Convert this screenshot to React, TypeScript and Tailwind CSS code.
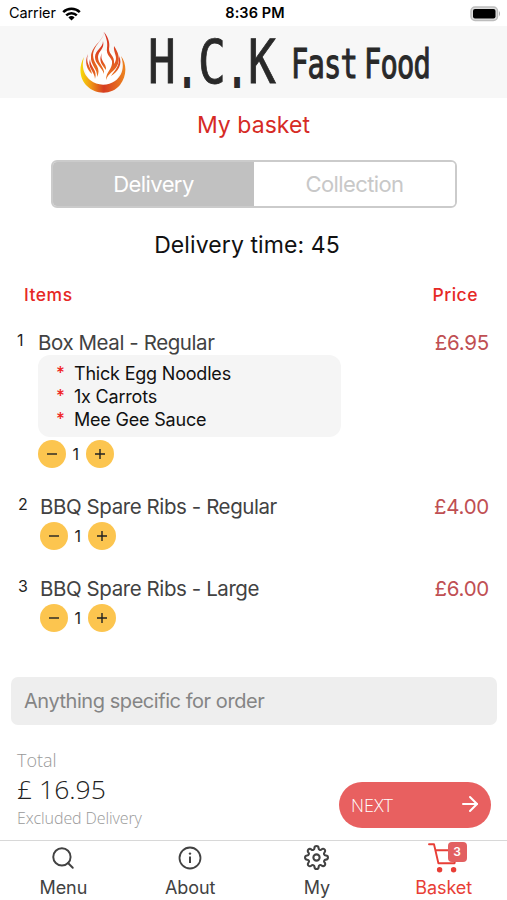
import { useState } from "react";
import { FiArrowRight, FiSearch, FiSettings } from "react-icons/fi";

interface BasketItem {
    name: string;
    price: string;
    quantity: number;
    extras: string[];
}

const initialItems: BasketItem[] = [
    { name: "Box Meal - Regular", price: "£6.95", quantity: 1, extras: ["Thick Egg Noodles", "1x Carrots", "Mee Gee Sauce"] },
    { name: "BBQ Spare Ribs - Regular", price: "£4.00", quantity: 1, extras: [] },
    { name: "BBQ Spare Ribs - Large", price: "£6.00", quantity: 1, extras: [] },
];

function StatusBar() {
    return (
        <div className="h-[26px] shrink-0 grid grid-cols-3 items-center pl-[9px] pr-[6px] pt-px text-black text-[14.5px] leading-none">
            <div className="flex items-center gap-[6px]">
                <span className="tracking-[-0.1px]">Carrier</span>
                <svg width="19" height="14" viewBox="0 0 19 14" fill="none" stroke="#000" strokeWidth="2.5">
                    <path d="M1.2 5.2 A11.8 11.8 0 0 1 17.8 5.2" />
                    <path d="M4.2 8.3 A7.6 7.6 0 0 1 14.8 8.3" />
                    <path d="M9.5 13.6 L6.4 10.4 A4.4 4.4 0 0 1 12.6 10.4 Z" fill="#000" stroke="none" />
                </svg>
            </div>
            <div className="text-center font-semibold text-[14.5px] tracking-[0.1px] whitespace-nowrap">8:36 PM</div>
            <div className="flex justify-end">
                <svg width="31" height="16" viewBox="0 0 31 16">
                    <rect x="1" y="1" width="26.5" height="13.5" rx="4" fill="#ddd" stroke="#bdbdbd" strokeWidth="1.5" />
                    <rect x="3" y="3" width="22.5" height="9.5" rx="2" fill="#000" />
                    <path d="M29 5 Q31 7.7 29 10.5 Z" fill="#aaa" />
                </svg>
            </div>
        </div>
    );
}

function FlameLogo() {
    return (
        <svg width="46" height="64" viewBox="0 0 46 64" className="shrink-0">
            <defs>
                <linearGradient id="ring" x1="0" y1="0" x2="1" y2="0">
                    <stop offset="0" stopColor="#f7dc08" />
                    <stop offset="0.22" stopColor="#f09a15" />
                    <stop offset="0.52" stopColor="#d63c22" />
                    <stop offset="1" stopColor="#ed851f" />
                </linearGradient>
                <linearGradient id="flame" x1="0" y1="0" x2="0" y2="1">
                    <stop offset="0" stopColor="#d52b23" />
                    <stop offset="1" stopColor="#e97620" />
                </linearGradient>
            </defs>
            <circle cx="23" cy="38" r="17.5" fill="#fff" />
            <path d="M4 27 C-2 38 0 49 7 56 C16 65 32 65 40 55 C47 46 47 34 41 26 C45 37 42 46 35 51 C28 56 17 56 10 50 C4 45 1 37 4 27 Z" fill="url(#ring)" />
            <g fill="url(#flame)">
                <path d="M24 0 C25 7 18 12 15 18 C11 25 14 31 17 36 C19 40 19 43 17 47 C18 39 10 35 11 26 C12 15 25 10 24 0 Z" />
                <path d="M24 2 C29 8 30 14 29 19 C29 25 35 25 34 34 C39 27 33 23 34 16 C38 22 41 29 37 36 C34 42 29 42 26 50 C26 41 33 39 32 31 C30 26 26 25 27 18 C28 12 26 7 24 2 Z" />
                <path d="M23 11 C25 19 18 21 18 27 C18 34 25 37 24 44 C22 37 15 34 15 27 C15 20 23 18 23 11 Z" />
                <path d="M8 24 C5 33 11 37 12 44 C7 40 4 32 8 24 Z" />
                <path d="M10 29 C10 37 18 40 15 49 C15 42 7 38 10 29 Z" />
                <path d="M39 26 C43 34 38 42 31 46 C35 40 40 36 39 26 Z" />
                <path d="M22 23 C19 31 27 33 26 40 C22 35 18 31 22 23 Z" />
            </g>
        </svg>
    );
}

function Header() {
    return (
        <header className="h-[72px] shrink-0 bg-[#f7f7f7] flex items-center pl-[80px] font-['DejaVu_Sans_Mono',monospace] text-[#292929]">
            <FlameLogo />
            <div className="flex items-center ml-[22px] w-[128px] h-[61px] text-[60px] leading-none">
                {["H", ".", "C", ".", "K"].map((letter, i) => (
                    <span
                        key={i}
                        className={
                            letter === "."
                                ? "w-[22px] flex justify-center scale-x-[0.6] pt-[8px] [-webkit-text-stroke:2px_#292929]"
                                : "w-[28px] flex justify-center scale-x-[0.77] [-webkit-text-stroke:0.9px_#292929]"
                        }
                    >
                        {letter}
                    </span>
                ))}
            </div>
            <div className="ml-[15px] mt-[4px] w-[140px] text-[40px] leading-none whitespace-nowrap tracking-[-1.2px] [word-spacing:-13px] origin-left scale-x-[0.72] [-webkit-text-stroke:1.1px_#292929]">Fast Food</div>
        </header>
    );
}

function Stepper({ quantity, onChange }: { quantity: number; onChange: (delta: number) => void }) {
    return (
        <div className="flex items-center h-7 text-[#222]">
            <button onClick={() => onChange(-1)} className="size-7 rounded-full bg-[#fcc54f] flex items-center justify-center">
                <svg width="10" height="10" viewBox="0 0 10 10" stroke="currentColor" strokeWidth="1.4"><path d="M0 5H10" /></svg>
            </button>
            <span className="w-[19.5px] text-center text-[16px]">{quantity}</span>
            <button onClick={() => onChange(1)} className="size-7 rounded-full bg-[#fcc54f] flex items-center justify-center">
                <svg width="10" height="10" viewBox="0 0 10 10" stroke="currentColor" strokeWidth="1.4"><path d="M0 5H10M5 0V10" /></svg>
            </button>
        </div>
    );
}

function InfoIcon() {
    return (
        <svg width="24" height="24" viewBox="0 0 24 24" fill="none" stroke="currentColor" strokeWidth="1.8">
            <circle cx="12" cy="12" r="10.5" />
            <path d="M12 10.6V17" strokeWidth="2" />
            <circle cx="12" cy="7.6" r="1.2" fill="currentColor" stroke="none" />
        </svg>
    );
}

function CartIcon() {
    return (
        <svg width="34" height="32" viewBox="0 0 34 32" fill="none" stroke="currentColor" strokeWidth="1.9" strokeLinecap="round" strokeLinejoin="round">
            <path d="M2 3.2H7L11.4 22.2H27.5L30 9.2H8.6" />
            <circle cx="12.6" cy="28.8" r="2.7" fill="currentColor" stroke="none" />
            <circle cx="26.6" cy="28.8" r="2.7" fill="currentColor" stroke="none" />
        </svg>
    );
}

export default function App() {
    const [items, setItems] = useState(initialItems);
    const [mode, setMode] = useState("Delivery");

    const changeQuantity = (index: number, delta: number) => {
        setItems(items.map((item, i) => (i === index ? { ...item, quantity: Math.max(1, item.quantity + delta) } : item)));
    };

    return (
        <div className="w-[507px] h-[900px] bg-white flex flex-col overflow-hidden font-['Inter',sans-serif]">
            <StatusBar />
            <Header />

            <h1 className="h-[54px] text-center text-[23px] leading-[54px] tracking-[0.05px] text-[#d62a25]">My basket</h1>

            <div className="mt-[8px] mx-[51px] w-[406px] h-[48px] shrink-0 flex rounded-[6px] border-2 border-[#cbcbcb] overflow-hidden">
                {["Delivery", "Collection"].map((label) => (
                    <button
                        key={label}
                        onClick={() => setMode(label)}
                        className={mode === label ? "flex-1 bg-[#c1c1c1] text-white text-[22px] tracking-[-0.6px]" : "flex-1 bg-white text-[#c8c8c8] text-[22px] tracking-[-0.6px]"}
                    >
                        {label}
                    </button>
                ))}
            </div>

            <p className="mt-[20px] h-8 pr-[13px] text-center text-[23px] leading-[34px] tracking-[0.1px] text-[#111]">Delivery time: 45</p>

            <div className="mt-[23px] h-6 pl-[24px] pr-[29px] flex items-center justify-between text-[17.5px] font-medium tracking-[0.5px] text-[#e62824]">
                <span>Items</span>
                <span>Price</span>
            </div>

            <div className="mt-[21px] h-[349px] shrink-0">
                {items.map((item, index) => (
                    <div key={item.name} className={item.extras.length ? "h-[164px] pl-[17px] pr-[18px] flex items-start" : "h-[82px] pl-[18px] pr-[18px] flex items-start"}>
                        <span className={item.extras.length ? "w-[21px] text-[16px] leading-[25px] text-[#222]" : "w-[22px] text-[16px] leading-[25px] text-[#222]"}>{index + 1}</span>
                        <div className="flex-1">
                            <div className="h-[27px] text-[20.5px] leading-[30px] tracking-[-0.42px] text-[#424242] whitespace-nowrap">{item.name}</div>
                            {item.extras.length > 0 ? (
                                <ul className="w-[303px] h-[82px] mb-[3px] pt-[7px] rounded-[12px] bg-[#f5f5f5] text-[18px] leading-[23px] tracking-[-0.2px] text-[#111]">
                                    {item.extras.map((extra) => (
                                        <li key={extra} className="flex">
                                            <span className="w-[36px] pl-[18px] text-[#f02525] text-[17px] font-medium">*</span>
                                            {extra}
                                        </li>
                                    ))}
                                </ul>
                            ) : (
                                <div className="h-[3px]" />
                            )}
                            <Stepper quantity={item.quantity} onChange={(delta) => changeQuantity(index, delta)} />
                        </div>
                        <span className="text-[20.5px] leading-[30px] tracking-[-0.25px] text-[#bf4f53]">{item.price}</span>
                    </div>
                ))}
            </div>

            <input placeholder="Anything specific for order" className="mx-[11px] w-[486px] h-[48px] mb-px shrink-0 rounded-[7px] bg-[#eee] px-[13px] text-[20px] tracking-[-0.45px] placeholder:text-[#858585] outline-none" />

            <div className="h-[114px] shrink-0 pl-[17px] pr-[16px] pt-[21px] flex justify-between font-['Open_Sans'] font-light">
                <div className="text-[#999]">
                    <div className="h-[26px] text-[18px] leading-[26px]">Total</div>
                    <div className="h-[31px] text-[26.5px] leading-[32px] text-[#222]">£ 16.95</div>
                    <div className="h-[26px] text-[16px] leading-[28px] tracking-[-0.1px]">Excluded Delivery</div>
                </div>
                <button className="mt-[35px] w-[152px] h-[46px] rounded-full bg-[#e86060] text-white flex items-center justify-between pl-[12px] pr-[9px] text-[18px]">
                    NEXT
                    <FiArrowRight size={24} className="-mt-[2px]" />
                </button>
            </div>

            <nav className="h-[60px] shrink-0 border-t border-[#d8d8d8] grid grid-cols-4 text-[18px] tracking-[-0.1px] text-[#424242]">
                <div className="flex flex-col items-center">
                    <span className="h-[33px] mb-px flex items-center"><FiSearch size={26} strokeWidth={1.8} /></span>
                    <span className="leading-[26px]">Menu</span>
                </div>
                <div className="flex flex-col items-center">
                    <span className="h-[33px] mb-px flex items-center"><InfoIcon /></span>
                    <span className="leading-[26px]">About</span>
                </div>
                <div className="flex flex-col items-center">
                    <span className="h-[33px] mb-px flex items-center"><FiSettings size={25} strokeWidth={2} /></span>
                    <span className="leading-[26px]">My</span>
                </div>
                <div className="flex flex-col items-center text-[#e83e36]">
                    <span className="h-[34px] flex relative">
                        <CartIcon />
                        <span className="absolute left-[21px] top-[1px] w-[19px] h-[20px] rounded-[4px] bg-[#e26061] text-white text-[12px] leading-[20px] font-semibold text-center">3</span>
                    </span>
                    <span className="leading-[26px]">Basket</span>
                </div>
            </nav>
        </div>
    );
}
